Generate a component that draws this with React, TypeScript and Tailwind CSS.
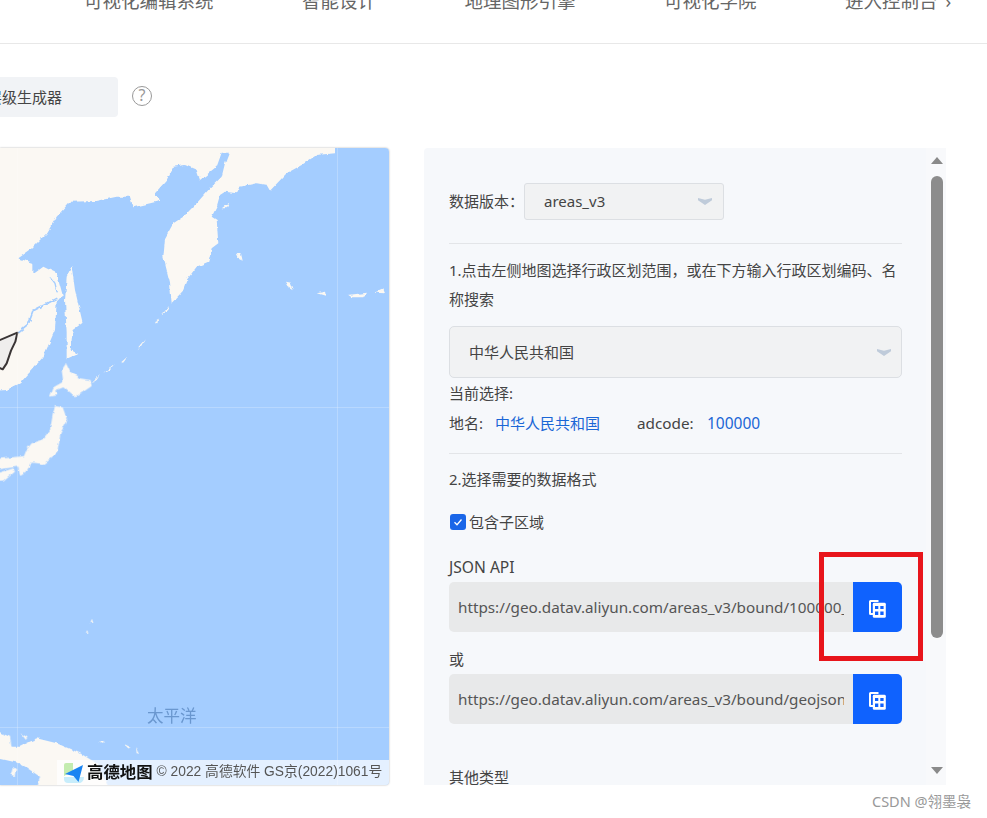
const CJK = '[font-family:"Noto_Sans","Noto_Sans_CJK_SC",sans-serif]';

function Chevron() {
  return (
    <svg width="14" height="7" viewBox="0 0 14 7" className="shrink-0">
      <path d="M0 0 L7 1.8 L14 0 L14 2.2 L7 7 L0 2.2 Z" fill="#bfcbda" />
    </svg>
  );
}

function CopyIcon() {
  return (
    <svg width="17" height="18" viewBox="0 0 17 18" className="mt-[3px] -ml-px">
      <path d="M0 1.5 A1.5 1.5 0 0 1 1.5 0 H9.5 V2 H2 V13 H4 V15 H1.5 A1.5 1.5 0 0 1 0 13.5 Z" fill="#fff" />
      <rect x="3.8" y="2.8" width="13" height="15" rx="1.4" fill="#fff" />
      <path d="M6 6 H9.3 V9 H6 Z M11.3 6 H14.6 V9 H11.3 Z M6 11.4 H9.3 V15 H6 Z M11.3 11.4 H14.6 V15 H11.3 Z" fill="#0f62fe" />
    </svg>
  );
}

function UrlField({ url }: { url: string }) {
  return (
    <div className="flex h-[50px]">
      <div className="flex-1 min-w-0 bg-[#e8e9ea] rounded-l-[5px] px-[9px] flex items-center">
        <div className="overflow-hidden whitespace-nowrap text-[15.25px] text-[#555] w-full">{url}</div>
      </div>
      <button className="w-[49px] bg-[#0f62fe] rounded-r-[5px] flex items-center justify-center">
        <CopyIcon />
      </button>
    </div>
  );
}

function MapDrawing() {
  const land = "#fbf8f3";
  const water = "#a4cdff";
  return (
    <svg viewBox="0 0 389 637" width="389" height="637" className="block">
      <defs>
        <filter id="coast" x="-5%" y="-5%" width="110%" height="110%">
          <feTurbulence type="fractalNoise" baseFrequency="0.16" numOctaves="2" seed="4" result="n" />
          <feDisplacementMap in="SourceGraphic" in2="n" scale="4" xChannelSelector="R" yChannelSelector="G" />
          <feGaussianBlur stdDeviation="0.35" />
        </filter>
      </defs>
      <rect width="389" height="637" fill={water} />
      <g filter="url(#coast)">
        <g transform="translate(0,-148) scale(0.33333)" fill={land}>
          <path d="M-20 435 L1005 435 L1005 460 L950 465 L905 495 L860 520 L810 572 L800 555 L770 550 L720 560 L710 580 L675 575 L660 585 L650 620 L635 650 L650 660 L655 730 L635 745 L625 785 L590 800 L560 840 L545 880 L515 912 L510 850 L490 770 L495 715 L520 670 L550 650 L590 610 L625 570 L650 545 L665 530 L675 490 L687 458 L665 458 L650 500 L600 540 L590 510 L555 495 L520 500 L500 540 L465 580 L482 602 L400 622 L390 590 L350 590 L290 603 L210 605 L170 650 L140 700 L90 750 L55 775 L100 790 L100 822 L130 800 L170 820 L188 885 L170 905 L165 990 L130 1070 L60 1150 L20 1170 L-20 1172 Z" />
          <path d="M215 798 L225 870 L248 968 L218 990 L212 1050 L235 1062 L200 1078 L200 1000 L195 900 L200 830 Z" />
          <path d="M485 945 L510 915 L505 930 Z M465 970 L475 950 L472 970 Z M410 1050 L438 1018 L425 1040 Z M360 1090 L382 1070 L372 1085 Z M310 1118 L345 1090 L330 1108 Z M275 1150 L300 1125 L290 1140 Z" />
          <path d="M665 625 L688 608 L680 625 Z M710 760 L722 757 L728 782 L718 778 Z M855 845 L870 848 L878 868 L862 858 Z" />
          <path d="M950 880 L975 875 L978 888 Z M1045 885 L1098 878 L1090 892 L1055 892 Z M1125 878 L1150 868 L1155 880 Z" />
          <path d="M50 1000 L85 972 L100 932 L172 895" fill="none" stroke={water} strokeWidth="5" />
          <path d="M150 830 L165 850 L172 880" fill="none" stroke={water} strokeWidth="4" />
        </g>
        <g transform="translate(0,152) scale(0.33333)" fill={land}>
          <path d="M198 190 L210 215 L240 235 L272 240 L275 258 L225 292 L190 262 L165 272 L175 285 L150 290 L160 262 L190 245 L185 210 Z" />
          <path d="M165 318 L188 322 L202 360 L182 398 L172 458 L130 492 L95 488 L85 510 L60 525 L55 500 L-20 510 L-20 478 L72 468 L80 448 L95 430 L125 420 L150 390 L158 345 Z" />
          <path d="M-20 524 L40 505 L45 515 L10 545 L-20 547 Z" />
        </g>
        <g transform="translate(0,252) scale(0.33333)" fill={land}>
          <path d="M-20 990 L30 1010 L35 1040 L60 1040 L110 1015 L170 1030 L240 1060 L290 1090 L330 1170 L110 1170 L120 1130 L60 1090 L-20 1072 Z" />
          <path d="M38 1100 L48 1108 L44 1128 L32 1125 Z M295 1026 L312 1022 L310 1032 Z M375 1032 L392 1040 L385 1046 Z M408 1040 L420 1062 L410 1060 Z M62 1000 L82 1012 L78 1020 Z" />
          <path d="M275 660 L280 668 L272 670 Z M262 690 L265 698 L258 698 Z" />
        </g>
      </g>
      <g transform="translate(0,-148) scale(0.33333)">
        <path d="M-5 1022 L52 998 L46 1025 L33 1052 L20 1090 L8 1108 L-5 1102 Z" fill="#efeeed" stroke="#3a3535" strokeWidth="6" strokeLinejoin="round" />
      </g>
      <path d="M17.5 0 V637 M337.5 0 V637 M0 259.5 H389 M0 579.5 H389" stroke="#ffffff" strokeOpacity="0.22" strokeWidth="1" />
    </svg>
  );
}

function AmapLogo() {
  return (
    <svg width="21" height="21" viewBox="0 0 21 21" className="shrink-0">
      <path d="M1 3 A2 2 0 0 1 3 1 H10 V9 L1 14 Z" fill="#c4ecb0" />
      <path d="M1 15 H21 A5 6 0 0 1 15 21 H5 A4 4 0 0 1 1 17 Z" fill="#c8edfb" />
      <path d="M2 12 L20 3 L15.5 20 L10.5 14 Z" fill="#1a84f2" />
    </svg>
  );
}

export default function App() {
  return (
    <div className={`relative h-[818px] w-[987px] overflow-hidden bg-white text-[15px] text-[#444] ${CJK}`}>
      <header className="h-[44px] border-b border-[#e8e8e8] overflow-hidden">
        <nav className="flex gap-[88.5px] pl-[84px] -mt-[13px] text-[18.5px] leading-[27px] text-[#666] whitespace-nowrap">
          <span>可视化编辑系统</span>
          <span>智能设计</span>
          <span>地理图形引擎</span>
          <span>可视化学院</span>
          <span>进入控制台<span className="ml-[8px]">›</span></span>
        </nav>
      </header>

      <main className="flex">
        <section className="w-[389px] shrink-0 pt-[33px]">
          <div className="flex items-center gap-[14px]">
            <div className="w-[118px] h-[40px] bg-[#f1f3f6] rounded-r-[4px] flex items-center justify-end pr-[56px] whitespace-nowrap">
              行政区划层级生成器
            </div>
            <div className="mb-[2px] w-[20px] h-[20px] rounded-full border-[1.5px] border-[#999] text-[#999] text-[16px] leading-[17px] text-center">?</div>
          </div>

          <div className="relative mt-[31px] h-[637px] rounded-r-[4px] overflow-hidden shadow-[0_0_2px_rgba(0,0,0,0.35)]">
            <MapDrawing />
            <div className="absolute left-[147px] top-[557px] text-[16.5px] leading-[22px] text-[#6a97cf]">太平洋</div>
            <div className="absolute left-[57px] right-0 bottom-0 h-[25px] bg-white/70 flex items-center pl-[6px] whitespace-nowrap">
              <AmapLogo />
              <span className="ml-[3px] text-[16.4px] font-bold text-[#111] leading-none">高德地图</span>
              <span className="ml-[4px] text-[13.8px] text-[#555] [font-family:'Liberation_Sans','Noto_Sans_CJK_SC',sans-serif]">© 2022 高德软件 GS京(2022)1061号</span>
            </div>
          </div>
        </section>

        <section className="ml-[35px] mt-[104px] w-[522px] h-[637px] flex bg-[#f6f8fb] rounded-tl-[4px] overflow-hidden">
          <div className="w-[502px] pl-[25px] pr-[24px] pt-[35px] overflow-hidden">
            <div className="flex items-center h-[37px]">
              <span className="w-[75px]">数据版本：</span>
              <div className="w-[200px] h-[37px] bg-[#f1f2f3] border border-[#dcdfe3] rounded-[3px] flex items-center justify-between pl-[19px] pr-[11px]">
                <span>areas_v3</span>
                <Chevron />
              </div>
            </div>
            <div className="mt-[23px] border-t border-[#e3e5e8]" />
            <p className="mt-[12px] leading-[29px]">1.点击左侧地图选择行政区划范围，或在下方输入行政区划编码、名称搜索</p>
            <div className="mt-[12px] h-[52px] bg-[#f1f2f3] border border-[#dcdfe3] rounded-[5px] flex items-center justify-between pl-[19px] pr-[10px]">
              <span>中华人民共和国</span>
              <Chevron />
            </div>
            <div className="leading-[30px]">当前选择:</div>
            <div className="flex leading-[30px]">
              <span className="w-[46px]">地名:</span>
              <span className="w-[142px] text-[#1a66d6]">中华人民共和国</span>
              <span className="w-[70px] text-[15.3px]">adcode:</span>
              <span className="text-[15.5px] text-[#1a66d6]">100000</span>
            </div>
            <div className="mt-[15px] border-t border-[#e3e5e8]" />
            <div className="mt-[10px] leading-[30px]">2.选择需要的数据格式</div>
            <div className="mt-[13px] h-[30px] flex items-center">
              <div className="ml-px w-[16px] h-[16px] rounded-[3px] bg-[#1a66e8] flex items-center justify-center">
                <svg width="12" height="12" viewBox="0 0 12 12">
                  <path d="M2.5 6.2 L5 8.7 L9.5 3.5" fill="none" stroke="#fff" strokeWidth="1.3" />
                </svg>
              </div>
              <span className="ml-[3px]">包含子区域</span>
            </div>
            <div className="mt-[15px] leading-[30px] text-[15.6px]">JSON API</div>
            <UrlField url="https://geo.datav.aliyun.com/areas_v3/bound/100000_full.json" />
            <div className="mt-[12px] leading-[30px]">或</div>
            <UrlField url="https://geo.datav.aliyun.com/areas_v3/bound/geojson?code=100000_full" />
            <div className="mt-[38px] leading-[30px]">其他类型</div>
          </div>

          <div className="w-[20px] shrink-0 flex flex-col items-center pt-[8px] pb-[10px] pl-px bg-[#f8f9fb]">
            <svg width="12" height="9" viewBox="0 0 12 9"><path d="M6 1 L12 8 H0 Z" fill="#8a8a8a" /></svg>
            <div className="mt-[11px] w-[12px] h-[462px] rounded-full bg-[#8c8c8c]" />
            <svg width="12" height="9" viewBox="0 0 12 9" className="mt-auto"><path d="M0 1 H12 L6 8 Z" fill="#8a8a8a" /></svg>
          </div>
        </section>
      </main>

      <div className="absolute left-[819px] top-[552px] w-[104px] h-[109px] border-[5px] border-[#e8151b]" />
      <div className="absolute left-[872px] top-[791px] text-[14.5px] leading-[20px] text-[#999]">CSDN @翎墨袅</div>
    </div>
  );
}
